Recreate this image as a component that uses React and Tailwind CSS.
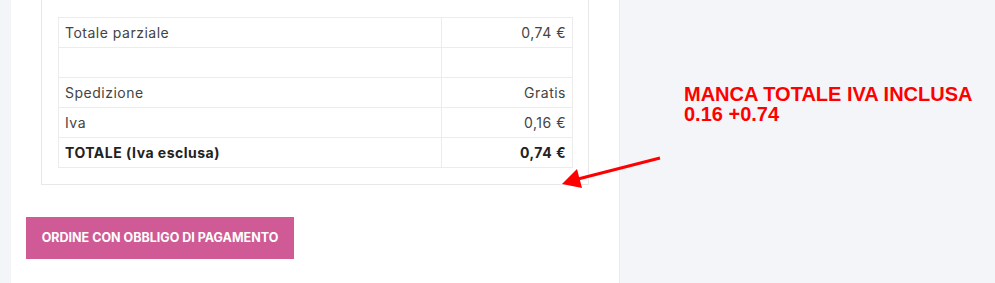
const rows = [
  { label: "Totale parziale", value: "0,74 €" },
  { label: "", value: "" },
  { label: "Spedizione", value: "Gratis" },
  { label: "Iva", value: "0,16 €" },
  { label: "TOTALE (Iva esclusa)", value: "0,74 €", bold: true },
];

export default function App() {
  return (
    <div className="relative flex w-[995px] h-[283px] overflow-hidden bg-[#f4f5f9] font-['Inter',sans-serif] text-[#333]">
      <div className="w-[11px] shrink-0" />
      <div className="w-[609px] shrink-0 bg-white border-r border-[#ebebef]">
        <div className="ml-[30px] w-[548px] border-x border-b border-[#e8e8e8] pt-[17px] pb-[16px] pl-[16px] pr-[15px]">
          <table className="w-full border-collapse text-[14px] tracking-[0.5px]">
            <tbody>
              {rows.map((r, i) => (
                <tr key={i} className="h-[30px]">
                  <td className={`w-[383px] border border-[#ececec] px-[6px] py-0 ${r.bold ? "font-bold text-[#222]" : "text-[#444]"}`}>
                    {r.label}
                  </td>
                  <td className={`border border-[#ececec] px-[6px] py-0 text-right ${r.bold ? "font-bold text-[#222]" : "text-[#444]"}`}>
                    {r.value}
                  </td>
                </tr>
              ))}
            </tbody>
          </table>
        </div>
        <button className="ml-[15px] mt-[32px] w-[268px] h-[42px] bg-[#cf5a96] text-white text-[12.5px] font-bold">
          ORDINE CON OBBLIGO DI PAGAMENTO
        </button>
      </div>
      <div className="flex-1 pl-[64px] pt-[84px]">
        <p className="font-['Liberation_Sans',Arial,sans-serif] font-bold text-[20px] leading-[20px] text-[#ff0000]">
          MANCA TOTALE IVA INCLUSA
          <br />
          0.16 +0.74
        </p>
      </div>
      <svg className="absolute left-0 top-0 pointer-events-none" width="995" height="283">
        <line x1="660" y1="158" x2="578" y2="179" stroke="#f00" strokeWidth="3" />
        <polygon points="562,184 577,169 582,188" fill="#f00" />
      </svg>
    </div>
  );
}
